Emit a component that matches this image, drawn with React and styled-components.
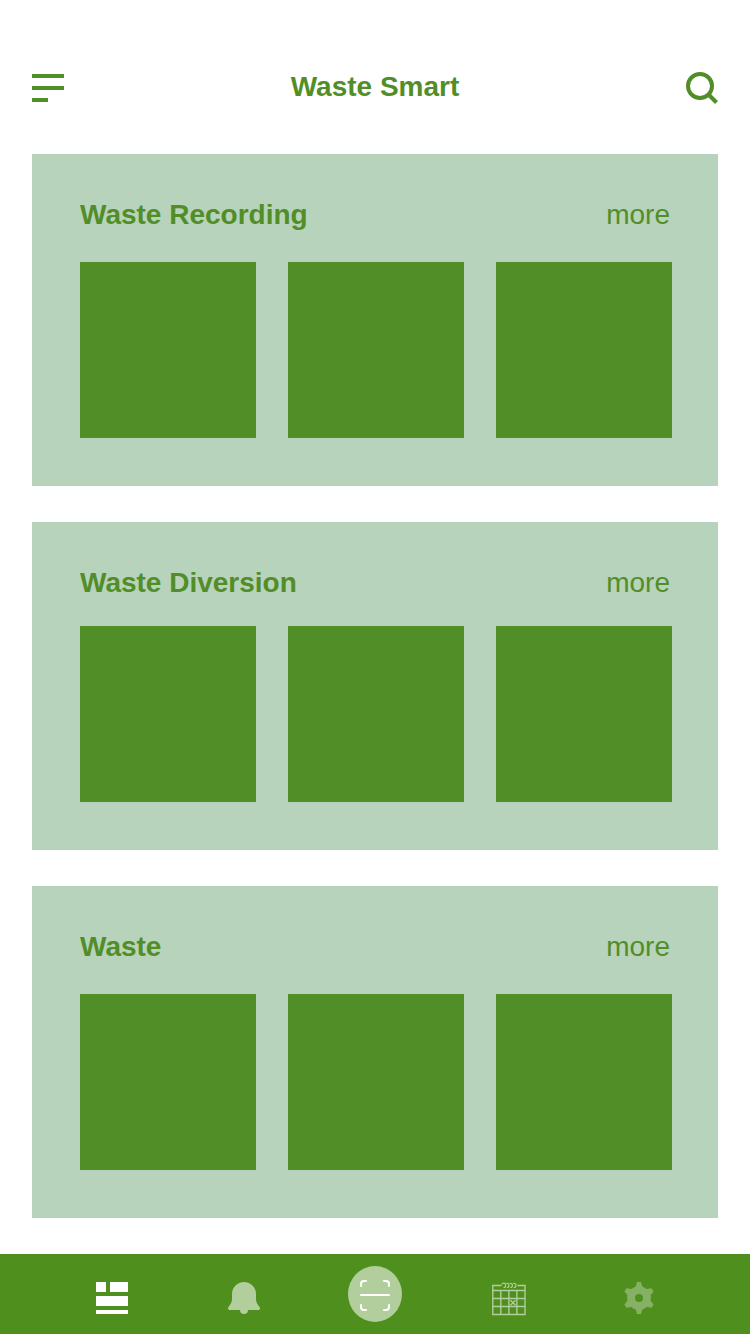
import React from "react";
import styled, { createGlobalStyle } from "styled-components";

const green = "#528E28";
const navGreen = "#4F8F1D";
const cardGreen = "#B7D3BB";
const pale = "#B1CE9C";

const GlobalStyle = createGlobalStyle`
  *, *::before, *::after { box-sizing: border-box; }
  body {
    margin: 0;
    background: #fff;
    color: ${green};
    font-family: "Liberation Sans", Arial, sans-serif;
    font-size: 28px;
    line-height: 34px;
  }
`;

const Page = styled.div`
  display: flex;
  flex-direction: column;
  min-height: 100vh;
`;

const Header = styled.header`
  display: grid;
  grid-template-columns: 1fr auto 1fr;
  align-items: center;
  padding: 70px 32px 48px;
`;

const IconButton = styled.button`
  display: block;
  padding: 0;
  border: 0;
  background: none;
  color: inherit;
  cursor: pointer;
  justify-self: ${({ $align }) => $align};

  svg { display: block; }
`;

const AppTitle = styled.h1`
  margin: 0;
  padding-bottom: 2px;
  font-size: 28px;
  line-height: 34px;
  font-weight: 700;
`;

const Main = styled.main`
  flex: 1;
  display: flex;
  flex-direction: column;
  gap: 36px;
  padding: 0 32px 36px;
`;

const Card = styled.section`
  display: flex;
  flex-direction: column;
  gap: ${({ $compact }) => ($compact ? 26 : 30)}px;
  padding: 44px 46px 48px 48px;
  background: ${cardGreen};
`;

const CardHeader = styled.div`
  display: flex;
  justify-content: space-between;
  padding-right: 2px;
`;

const CardTitle = styled.h2`
  margin: 0;
  font-size: 28px;
  line-height: 34px;
  font-weight: 700;
`;

const MoreLink = styled.a`
  color: inherit;
  text-decoration: none;
`;

const Tiles = styled.div`
  display: grid;
  grid-template-columns: repeat(3, 1fr);
  gap: 32px;
`;

const Tile = styled.div`
  aspect-ratio: 1;
  background: ${green};
`;

const Nav = styled.nav`
  display: grid;
  grid-template-columns: repeat(5, 1fr);
  height: 80px;
  padding: 0 44px 0 46px;
  background: ${navGreen};
`;

const NavButton = styled.button`
  display: flex;
  align-items: flex-start;
  justify-content: center;
  padding: ${({ $raised }) => ($raised ? 12 : 28)}px 0 0;
  border: 0;
  background: none;
  color: ${({ $active }) => ($active ? "#fff" : pale)};
  cursor: pointer;
`;

const MenuIcon = () => (
  <svg width="32" height="32" fill="currentColor" aria-hidden="true">
    <path d="M0 2h32v4H0zM0 14h32v4H0zM0 26h16v4H0z" />
  </svg>
);

const SearchIcon = () => (
  <svg width="32" height="32" fill="none" stroke="currentColor" strokeWidth="4" aria-hidden="true">
    <circle cx="14" cy="14" r="12" />
    <path d="M22.5 22.5L30.5 30.5" />
  </svg>
);

const DashboardIcon = () => (
  <svg width="32" height="32" fill="currentColor" aria-hidden="true">
    <path d="M0 0h10v10H0zM14 0h18v10H14zM0 14h32v10H0zM0 28h32v4H0z" />
  </svg>
);

const BellIcon = () => (
  <svg width="32" height="32" fill="currentColor" aria-hidden="true">
    <path d="M16 0C22.6 0 28 5.2 28 12V17C28 20 29 21.7 31.2 24.4C32.8 26.3 32 28 30 28H20A4 4 0 0 1 12 28H2C0 28-.8 26.3.8 24.4C3 21.7 4 20 4 17V12C4 5.2 9.4 0 16 0Z" />
  </svg>
);

const ScanIcon = () => (
  <svg width="56" height="56" fill="none" aria-hidden="true">
    <ellipse cx="27" cy="28" rx="27" ry="28" fill={pale} />
    <g stroke="#fff" strokeWidth="2" strokeLinecap="round" strokeLinejoin="round">
      <path d="M18 15H16Q13 15 13 18V20M36 15H38Q41 15 41 18V20M13 39V41Q13 44 16 44H18M41 39V41Q41 44 38 44H36" />
      <path d="M13 29H41" />
    </g>
  </svg>
);

const CalendarIcon = () => (
  <svg width="36" height="34" viewBox="-2 0 36 34" fill="none" stroke="currentColor" aria-hidden="true">
    <path d="M9.5 3.5H.8V32.5H33V3.5H25.5M.8 8.5H33M.8 16.5H33M.8 24.5H33M8.8 8.5V32.5M16.9 8.5V32.5M24.9 8.5V32.5" strokeWidth="1.4" />
    <path d="M9.5 2.5Q10.5 1 12 1.2Q13.800 1.5 13.700 3.5Q13.600 5.5 11.5 5.5M14.200 1.3Q17 1 17 3.5Q17 5.5 14.900 5.5M17.600 1.3Q20.400 1 20.400 3.5Q20.400 5.5 18.300 5.5M21 1.3Q24 1 24 3.5Q24 5.5 21.800 5.5" strokeWidth="1.2" />
    <path d="M18.5 18.2L23.5 23.2M23.5 18.2L18.5 23.2" strokeWidth="1.3" />
  </svg>
);

const GearIcon = () => (
  <svg width="32" height="32" viewBox="1 0 32 32" aria-hidden="true">
    <path
      fill="#86B164"
      fillRule="evenodd"
      d="M14 0H18L19.300 4.500Q21.800 5.500 23.500 7L28.600 6.200L30.600 9.600L27.600 13.200Q28.200 16 27.600 18.800L30.600 22.400L28.600 25.800L23.500 25Q21.800 26.500 19.300 27.500L18 32H14L12.700 27.500Q10.200 26.500 8.500 25L3.400 25.800L1.400 22.400L4.400 18.800Q3.800 16 4.400 13.200L1.400 9.600L3.400 6.200L8.500 7Q10.200 5.500 12.700 4.500ZM16 12A4 4 0 1 0 16 20A4 4 0 1 0 16 12Z"
    />
  </svg>
);

const sections = [
  { title: "Waste Recording" },
  { title: "Waste Diversion", compact: true },
  { title: "Waste" },
];

const navItems = [
  { label: "Dashboard", Icon: DashboardIcon, active: true },
  { label: "Notifications", Icon: BellIcon },
  { label: "Scan", Icon: ScanIcon, raised: true },
  { label: "Calendar", Icon: CalendarIcon },
  { label: "Settings", Icon: GearIcon },
];

export default function App() {
  return (
    <Page>
      <GlobalStyle />
      <Header>
        <IconButton type="button" aria-label="Menu" $align="start">
          <MenuIcon />
        </IconButton>
        <AppTitle>Waste Smart</AppTitle>
        <IconButton type="button" aria-label="Search" $align="end">
          <SearchIcon />
        </IconButton>
      </Header>
      <Main>
        {sections.map(({ title, compact }) => (
          <Card key={title} $compact={compact}>
            <CardHeader>
              <CardTitle>{title}</CardTitle>
              <MoreLink href="#">more</MoreLink>
            </CardHeader>
            <Tiles>
              <Tile />
              <Tile />
              <Tile />
            </Tiles>
          </Card>
        ))}
      </Main>
      <Nav aria-label="Main">
        {navItems.map(({ label, Icon, active, raised }) => (
          <NavButton
            key={label}
            type="button"
            aria-label={label}
            aria-current={active ? "page" : undefined}
            $active={active}
            $raised={raised}
          >
            <Icon />
          </NavButton>
        ))}
      </Nav>
    </Page>
  );
}
